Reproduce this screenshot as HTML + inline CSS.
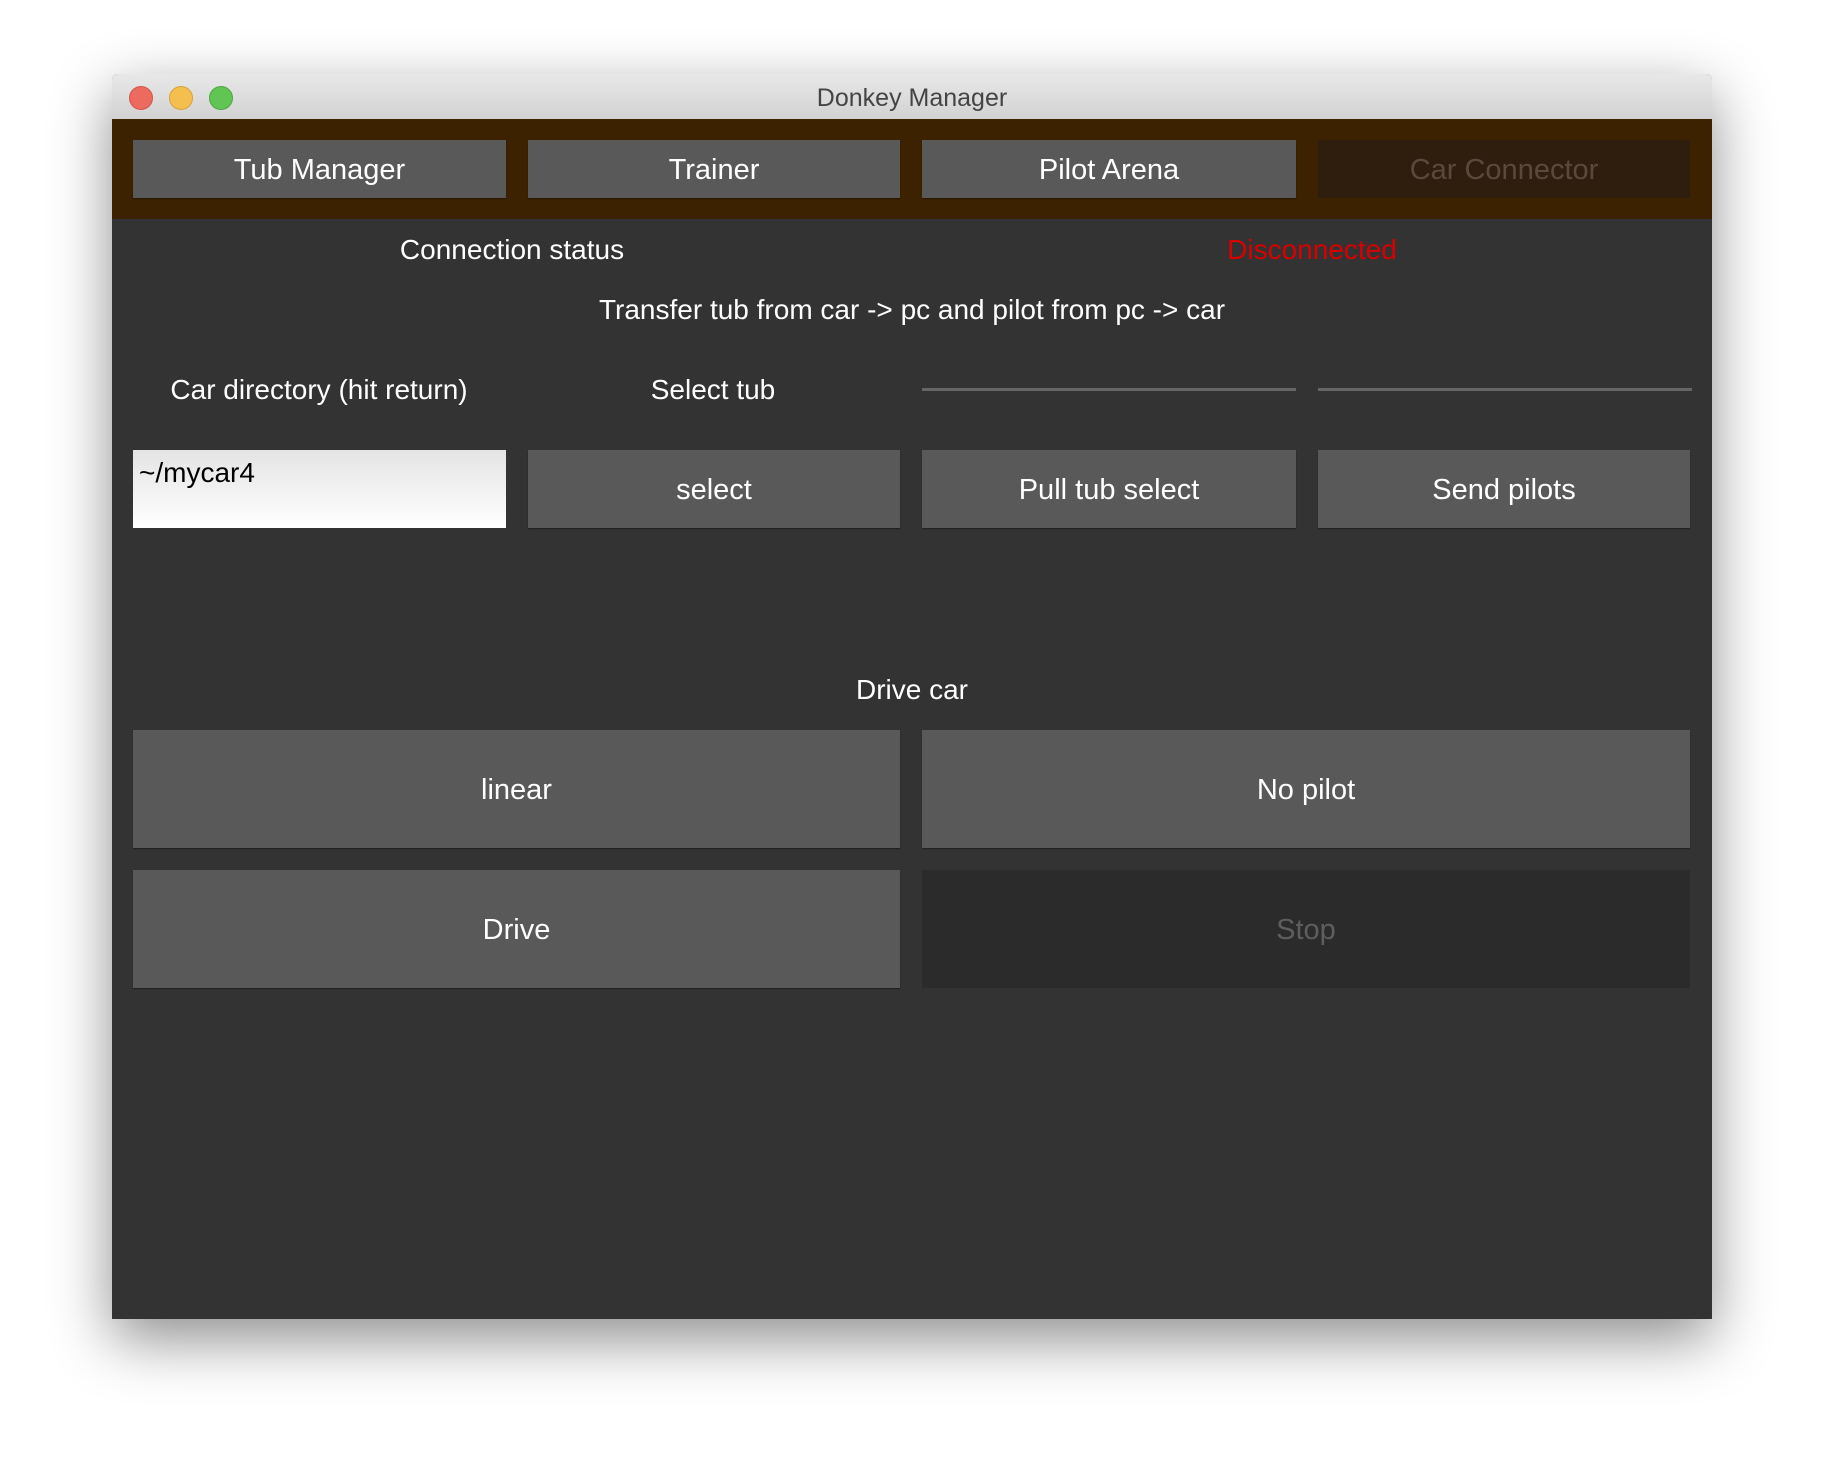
<!DOCTYPE html><html><head><style>
body{margin:0;width:1824px;height:1468px;background:#fff;font-family:"Liberation Sans",sans-serif;position:relative;overflow:hidden}
.win{position:absolute;left:112px;top:74px;width:1600px;height:1245px;background:#333;box-shadow:0 20px 60px rgba(0,0,0,.45);border-radius:6px 6px 0 0;overflow:hidden}
.tb{position:absolute;left:0;top:0;width:100%;height:45px;background:linear-gradient(#e8e8e8,#d2d2d2);border-bottom:1px solid #b8b8b8;text-align:center;font-size:25px;line-height:48px;color:#444}
.dot{position:absolute;top:12px;width:22px;height:22px;border-radius:50%}
.bar{position:absolute;left:0;top:45px;width:100%;height:100px;background:#3d2200}
.b{position:absolute;background:#595959;color:#fff;display:flex;align-items:center;justify-content:center;font-size:29px;padding-top:2px;box-sizing:border-box;box-shadow:0 1px 1px rgba(0,0,0,.4)}
.t{position:absolute;color:#fff;font-size:28px;transform:translateX(-50%);white-space:nowrap}
.ln{position:absolute;height:3px;background:#666;top:314px;width:374px}
</style></head><body><div class="win">
<div class="tb">Donkey Manager
<div class="dot" style="left:17px;background:#ed6a5e;border:1px solid #d1544a"></div>
<div class="dot" style="left:57px;background:#f5bf4f;border:1px solid #d6a13b"></div>
<div class="dot" style="left:97px;background:#61c554;border:1px solid #4ba73f"></div></div>
<div class="bar"></div>
<div class="b" style="left:21px;top:66px;width:373px;height:58px">Tub Manager</div>
<div class="b" style="left:416px;top:66px;width:372px;height:58px">Trainer</div>
<div class="b" style="left:810px;top:66px;width:374px;height:58px">Pilot Arena</div>
<div class="b" style="left:1206px;top:66px;width:372px;height:58px;background:#2f1e0e;color:#5a4a3c;box-shadow:none">Car Connector</div>
<div class="t" style="left:400px;top:160px">Connection status</div>
<div class="t" style="left:1200px;top:160px;color:#d80000">Disconnected</div>
<div class="t" style="left:800px;top:220px">Transfer tub from car -&gt; pc and pilot from pc -&gt; car</div>
<div class="t" style="left:207px;top:300px">Car directory (hit return)</div>
<div class="t" style="left:601px;top:300px">Select tub</div>
<div class="ln" style="left:810px"></div><div class="ln" style="left:1206px"></div>
<div style="position:absolute;left:21px;top:376px;width:373px;height:78px;background:linear-gradient(#e4e4e4,#fff);font-size:28px;color:#000;padding:7px 6px;box-sizing:border-box">~/mycar4</div>
<div class="b" style="left:416px;top:376px;width:372px;height:78px">select</div>
<div class="b" style="left:810px;top:376px;width:374px;height:78px">Pull tub select</div>
<div class="b" style="left:1206px;top:376px;width:372px;height:78px">Send pilots</div>
<div class="t" style="left:800px;top:600px">Drive car</div>
<div class="b" style="left:21px;top:656px;width:767px;height:118px">linear</div>
<div class="b" style="left:810px;top:656px;width:768px;height:118px">No pilot</div>
<div class="b" style="left:21px;top:796px;width:767px;height:118px">Drive</div>
<div class="b" style="left:810px;top:796px;width:768px;height:118px;background:#2b2b2b;color:#5e5e5e;box-shadow:none">Stop</div>
</div></body></html>
